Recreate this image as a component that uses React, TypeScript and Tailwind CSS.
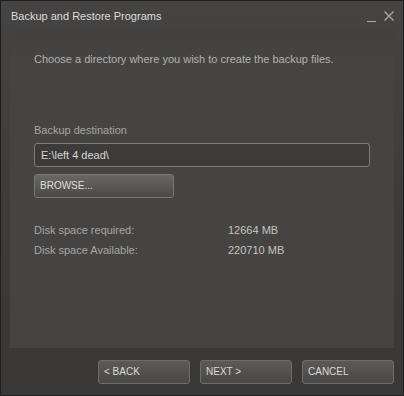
export default function App() {
  return (
    <div
      className="w-[404px] h-[396px] flex flex-col border border-[#1e1e1e] bg-gradient-to-b from-[#464442] via-[#3d3c3a] to-[#393836] text-[11px] leading-[14px] overflow-hidden"
      style={{ fontFamily: "Arial, 'Liberation Sans', sans-serif" }}
    >
      {/* title bar */}
      <div className="h-[30px] flex items-center justify-between pl-[10px] pr-[9px] shrink-0">
        <span className="text-[#dcdcdc] text-[11px]">Backup and Restore Programs</span>
        <div className="flex items-center gap-[8px]">
          <span className="w-[9px] h-[1px] bg-[#a8a6a4] mt-[10px]" />
          <svg width="10" height="10" viewBox="0 0 10 10">
            <path d="M0.5 0.5 L9.5 9.5 M9.5 0.5 L0.5 9.5" stroke="#b0aeac" strokeWidth="1.2" />
          </svg>
        </div>
      </div>

      {/* content panel */}
      <div className="mx-[9px] h-[317px] bg-gradient-to-b from-[#434140] to-[#464442] to-[10%] flex flex-col px-[24px] shrink-0">
        <p className="mt-[21px] text-[#b4b1ae]">Choose a directory where you wish to create the backup files.</p>

        <p className="mt-[57px] text-[#a8a5a2]">Backup destination</p>
        <div className="mt-[6px] h-[24px] w-[336px] rounded-[3px] border border-[#7f7c79] bg-[#3d3b39] flex items-center px-[6px] text-[#d8d6d4]">
          E:\left 4 dead\
        </div>
        <button className="mt-[7px] h-[24px] w-[140px] rounded-[3px] border border-[#7a7774] bg-gradient-to-b from-[#6a6764] to-[#4a4846] text-left px-[5px] text-[10px] text-[#e0dedc]">
          BROWSE...
        </button>

        <div className="mt-[25px] grid grid-cols-[194px_1fr] gap-y-[6px] text-[#a8a5a2]">
          <span>Disk space required:</span>
          <span className="text-[#c4c2c0]">12664 MB</span>
          <span>Disk space Available:</span>
          <span className="text-[#c4c2c0]">220710 MB</span>
        </div>
      </div>

      {/* footer buttons */}
      <div className="flex justify-end gap-[10px] pr-[9px] mt-[12px]">
        {["< BACK", "NEXT >", "CANCEL"].map((t) => (
          <button
            key={t}
            className="h-[24px] w-[92px] rounded-[3px] border border-[#6f6c69] bg-gradient-to-b from-[#5c5956] to-[#4a4846] text-left px-[5px] text-[10px] text-[#dcdad8]"
          >
            {t}
          </button>
        ))}
      </div>
    </div>
  );
}
